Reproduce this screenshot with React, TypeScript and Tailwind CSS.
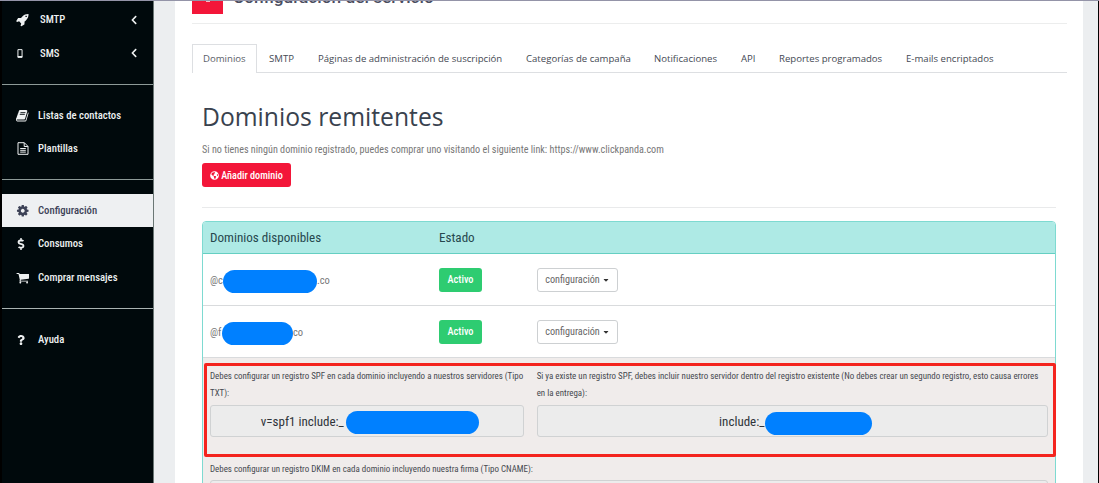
import type { ReactNode } from "react";
import { FaCaretDown, FaChevronLeft, FaDollarSign, FaGlobeAmericas, FaQuestion } from "react-icons/fa";

const paths = {
  rocket:
    "M1440 448q0-40-28-68t-68-28-68 28-28 68 28 68 68 28 68-28 28-68zm224-288q0 249-75.500 430.500t-253.500 360.500q-81 80-195 176l-20 379q-2 16-16 26l-384 224q-7 4-16 4-12 0-23-9l-64-64q-13-14-8-32l85-276-281-281-276 85q-3 1-9 1-14 0-23-9l-64-64q-17-19-5-39l224-384q10-14 26-16l379-20q96-114 176-195 188-187 358-258t431-71q14 0 24 9.500t10 22.500z",
  book:
    "M1639 478q40 57 18 129l-275 906q-19 64-76.500 107.500t-122.500 43.500h-923q-77 0-148.500-53.500t-99.500-131.500q-24-67-2-127 0-4 3-27t4-37q1-8-3-21.500t-3-19.500q2-11 8-21t16.500-23.500 16.500-23.500q23-38 45-91.500t30-91.500q3-10 .5-30t-.5-28q3-11 17-28t17-23q21-36 42-92t25-90q1-9-2.500-32t.5-28q4-13 22-30.500t22-22.500q19-26 42.500-84.500t27.500-96.500q1-8-3-25.500t-2-26.500q2-8 9-18t18-23 17-21q8-12 16.500-30.500t15-35 16-36 19.500-32 26.500-23.500 36-11.500 47.500 5.500l-1 3q38-9 51-9h761q74 0 114 56t18 130l-274 906q-36 119-71.500 153.500t-128.500 34.500h-869q-27 0-38 15-11 16-1 43 24 70 144 70h923q29 0 56-15.500t35-41.500l300-987q7-22 5-57 38 15 59 43zm-1064 2q-4 13 2 22.500t20 9.500h608q13 0 25.500-9.500t16.500-22.500l21-64q4-13-2-22.500t-20-9.500h-608q-13 0-25.500 9.500t-16.500 22.500zm-83 256q-4 13 2 22.500t20 9.500h608q13 0 25.500-9.500t16.500-22.500l21-64q4-13-2-22.500t-20-9.500h-608q-13 0-25.500 9.500t-16.500 22.500z",
  cog:
    "M1152 896q0-106-75-181t-181-75-181 75-75 181 75 181 181 75 181-75 75-181zm512-109v222q0 12-8 23t-20 13l-185 28q-19 54-39 91 35 50 107 138 10 12 10 25t-9 23q-27 37-99 108t-94 71q-12 0-26-9l-138-108q-44 23-91 38-16 136-29 186-7 28-36 28h-222q-14 0-24.500-8.500t-11.500-21.500l-28-184q-49-16-90-37l-141 107q-10 9-25 9-14 0-25-11-126-114-165-168-7-10-7-23 0-12 8-23 15-21 51-66.500t54-70.500q-27-50-41-99l-183-27q-13-2-21-12.500t-8-23.500v-222q0-12 8-23t19-13l186-28q14-46 39-92-40-57-107-138-10-12-10-24 0-10 9-23 26-36 98.500-107.500t94.500-71.500q13 0 26 10l138 107q44-23 91-38 16-136 29-186 7-28 36-28h222q14 0 24.500 8.500t11.500 21.500l28 184q49 16 90 37l142-107q9-9 24-9 13 0 25 10 129 119 165 170 7 8 7 22 0 12-8 23-15 21-51 66.500t-54 70.500q26 50 41 98l183 28q13 2 21 12.500t8 23.500z",
  cart:
    "M704 1536q0 52-38 90t-90 38-90-38-38-90 38-90 90-38 90 38 38 90zm896 0q0 52-38 90t-90 38-90-38-38-90 38-90 90-38 90 38 38 90zm128-1088v512q0 24-16.500 42.500t-40.500 21.500l-1044 122q13 60 13 70 0 16-24 64h920q26 0 45 19t19 45-19 45-45 19h-1024q-26 0-45-19t-19-45q0-11 8-31.500t16-36 21.500-40 15.500-29.500l-177-823h-204q-26 0-45-19t-19-45 19-45 45-19h256q16 0 28.500 6.500t19.500 15.500 13 24.500 8 26 5.500 29.500 4.500 26h1201q26 0 45 19t19 45z",
};

function Icon({ name }: { name: keyof typeof paths }) {
  return (
    <svg viewBox="0 0 1792 1792" className="-ml-px size-[13.5px] shrink-0 fill-current">
      <path d={paths[name]} />
    </svg>
  );
}

function FileIcon() {
  return (
    <svg viewBox="0 0 12 13" className="h-[13px] w-3 fill-none stroke-current">
      <path d="M1 .7h6.300l3.700 3.700v7.900H1zM7.200.8v3.700h3.700M3.200 6.500h5.600M3.200 8.300h5.600M3.200 10.100h5.600" />
    </svg>
  );
}

function PhoneIcon() {
  return (
    <svg viewBox="0 0 6 10" className="h-[9px] w-[6px] fill-none stroke-current">
      <path d="M.7.7h4.600v8.600H.7z" strokeWidth="1.100" />
      <path d="M.5 8.500h5" strokeWidth="1.400" />
    </svg>
  );
}

type ItemProps = { icon: ReactNode; label: string; sub?: boolean; active?: boolean };

function Item({ icon, label, sub, active }: ItemProps) {
  return (
    <li
      className={
        active
          ? "flex h-[33px] items-center bg-[#eef0f2] pl-[15px] text-[#3d4257]"
          : "flex h-[33.500px] items-center pl-[15px] text-[#eef1f2]"
      }
    >
      <span className={sub ? "flex w-[23px] items-center" : "flex w-[21px] items-center"}>{icon}</span>
      <span className="pt-0.5 text-[10.700px] leading-none font-medium">{label}</span>
      {sub && <FaChevronLeft className="mr-3.5 ml-auto size-2.5" />}
    </li>
  );
}

function Sidebar() {
  return (
    <nav className="w-[154px] shrink-0 border-r border-l-2 border-r-[#6b7775] border-l-black bg-[#00090c] pt-[3px]">
      <ul className="h-[82px] border-b border-[#8d9a98]">
        <Item sub icon={<Icon name="rocket" />} label="SMTP" />
        <Item sub icon={<PhoneIcon />} label="SMS" />
      </ul>
      <ul className="h-[95px] border-b border-[#8d9a98] pt-[13.500px]">
        <Item icon={<Icon name="book" />} label="Listas de contactos" />
        <Item icon={<FileIcon />} label="Plantillas" />
      </ul>
      <ul className="h-[129px] border-b border-[#a9b3b2] pt-3.5">
        <Item active icon={<Icon name="cog" />} label="Configuración" />
        <Item icon={<FaDollarSign className="-ml-px h-3 w-2.5" />} label="Consumos" />
        <Item icon={<Icon name="cart" />} label="Comprar mensajes" />
      </ul>
      <ul className="pt-3.5">
        <Item icon={<FaQuestion className="-ml-px h-2.5 w-2.5" />} label="Ayuda" />
      </ul>
    </nav>
  );
}

const tabs = [
  { label: "SMTP", width: "w-[49px]" },
  { label: "Páginas de administración de suscripción", width: "w-[208px]" },
  { label: "Categorías de campaña", width: "w-[128px]" },
  { label: "Notificaciones", width: "w-[87px]" },
  { label: "API", width: "w-[38px]" },
  { label: "Reportes programados", width: "w-[127px]" },
  { label: "E-mails encriptados", width: "w-[110px]" },
];

function Tabs() {
  return (
    <div className="mt-5 flex h-[29px] border-b border-[#dddfe2] font-['Open_Sans'] text-[9.600px] leading-none whitespace-nowrap text-[#454a54] [font-stretch:100%]">
      <div className="-mb-px flex w-[65px] items-center border border-b-0 border-[#dddfe2] bg-white pl-2.5 text-[#5b6068]">
        Dominios
      </div>
      {tabs.map((t) => (
        <div key={t.label} className={`flex items-center pt-px pl-3 ${t.width}`}>
          {t.label}
        </div>
      ))}
    </div>
  );
}

type DomainProps = { start: string; end: string; mask: string };

function DomainRow({ start, end, mask }: DomainProps) {
  return (
    <div className="flex h-[52px] items-center border-b border-[#d9dbdd] pl-[7px]">
      <div className="flex w-[229px] items-center text-[10.500px] text-[#777]">
        <span className="w-[13px] shrink-0 pt-0.5 whitespace-nowrap">{start}</span>
        <span className={`relative h-[23px] shrink-0 translate-y-0.5 rounded-full bg-[#0080ff] ${mask}`} />
        <span className="pt-0.5">{end}</span>
      </div>
      <div className="w-[98px]">
        <span className="flex h-6 w-[43px] items-center justify-center rounded-[3px] bg-[#2ecc71] pt-px text-[10.300px] font-medium text-white">
          Activo
        </span>
      </div>
      <button className="flex h-6 w-[81px] items-center justify-center rounded-[3px] border border-[#cdd0d2] bg-white text-[10.200px] text-[#666]">
        configuración
        <FaCaretDown className="ml-0.5 size-2 text-[#333]" />
      </button>
    </div>
  );
}

function Record({ width, mask, children, value }: { width: string; mask: string; children: ReactNode; value: string }) {
  return (
    <div className={width}>
      <p className="h-[38px] pt-px text-[8.920px] leading-[17px] whitespace-nowrap text-[#45494f]">{children}</p>
      <div className="flex h-8 items-center justify-center rounded-[3px] border border-[#d0d2d3] bg-[#ececec] pl-1.5 text-[13px] text-[#2f343a]">
        <span className="pt-px">{value}</span>
        <span className={`h-[23px] shrink-0 rounded-full bg-[#0080ff] ${mask}`} />
      </div>
    </div>
  );
}

function DomainTable() {
  return (
    <div className="mt-[13px] h-[300px] overflow-hidden rounded-t-[4px] border border-[#7edad1]">
      <div className="flex h-8 items-center border-b border-[#65cfc2] bg-[#aeeae5] pt-px pl-[7px] text-[13.100px] text-[#26484e]">
        <div className="w-[229px]">Dominios disponibles</div>
        <div>Estado</div>
      </div>
      <DomainRow start="@c" end=".co" mask="w-[94px]" />
      <DomainRow start="@f" end="co" mask="w-[71px] -ml-px" />
      <div className="h-[200px] bg-[#f0eceb] px-[7px] pt-[9px]">
        <div className="flex gap-[13px]">
          <Record width="w-[314px]" mask="w-[133px] ml-0.5 translate-y-px" value="v=spf1 include:_">
            Debes configurar un registro SPF en cada dominio incluyendo a nuestros servidores (Tipo
            <br />
            TXT):
          </Record>
          <Record width="w-[512px]" mask="w-[107px] translate-y-0.5" value="include:_">
            Si ya existe un registro SPF, debes incluir nuestro servidor dentro del registro existente (No debes crear un segundo registro, esto causa errores
            <br />
            en la entrega):
          </Record>
        </div>
        <p className="mt-[23px] h-5 pt-px text-[8.920px] leading-[17px] text-[#45494f]">
          Debes configurar un registro DKIM en cada dominio incluyendo nuestra firma (Tipo CNAME):
        </p>
        <div className="h-8 rounded-[3px] border border-[#d0d2d3] bg-[#ececec]" />
      </div>
    </div>
  );
}

export default function App() {
  return (
    <div className="relative flex h-[483px] w-[1099px] overflow-hidden bg-[#eceef0] font-['Roboto',sans-serif] [font-stretch:75%]">
      <div className="absolute inset-x-0 top-0 z-10 h-px bg-[#9494a8]" />
      <Sidebar />
      <main className="ml-[21px] w-[908px] bg-white pr-4 pl-[17px]">
        <header className="flex h-6 border-b border-[#eceded]">
          <div className="flex h-3.5 w-[31px] justify-center bg-[#f31639]">
            <span className="h-0.5 w-1 bg-white/70" />
          </div>
          <h1 className="-mt-[15px] ml-[10px] text-[17.300px] leading-6 font-medium text-[#4a4d60] [font-stretch:100%]">
            Configuración del servicio
          </h1>
        </header>
        <Tabs />
        <div className="pr-[11px] pl-2.5">
          <h2 className="mt-[26px] font-['Open_Sans'] text-[24.700px] leading-9 text-[#39424e] [font-stretch:100%]">
            Dominios remitentes
          </h2>
          <p className="mt-1.5 h-4 pt-px text-[10.150px] leading-4 text-[#777]">
            Si no tienes ningún dominio registrado, puedes comprar uno visitando el siguiente link: https://www.clickpanda.com
          </p>
          <button className="mt-1.5 flex h-6 w-[89px] items-center justify-center gap-0.5 rounded-[3px] bg-[#f31639] pt-px text-[10.200px] font-medium whitespace-nowrap text-white">
            <FaGlobeAmericas className="size-[9px]" />
            Añadir dominio
          </button>
          <hr className="mt-5 border-[#e9eaeb]" />
          <DomainTable />
        </div>
      </main>
      <div className="absolute top-[363px] left-[204px] h-[94px] w-[852px] rounded-[2px] border-3 border-[#f4241e]" />
      <div className="ml-auto w-px bg-black" />
    </div>
  );
}
